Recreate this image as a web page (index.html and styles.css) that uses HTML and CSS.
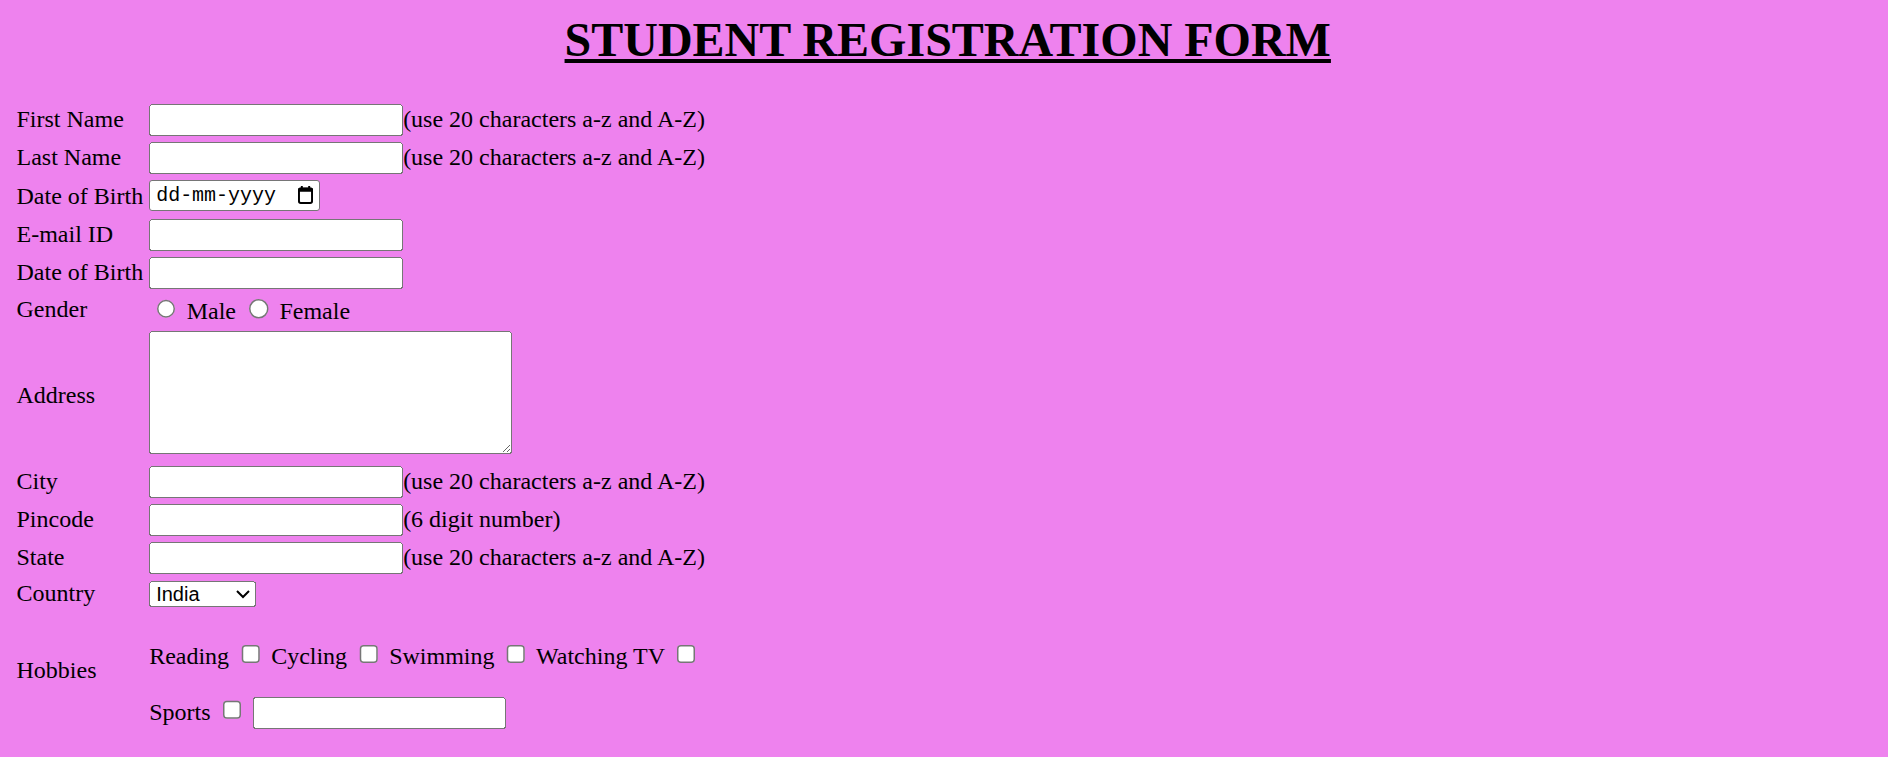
FILE: index.html
```html
<!DOCTYPE html>
<html lang="en">
<head>
<meta charset="utf-8">
<title>Student Registration Form</title>
<link rel="stylesheet" href="styles.css">
</head>
<body>
<h1 class="title">STUDENT REGISTRATION FORM</h1>
<form class="form">
  <label class="lbl" for="fn">First Name</label>
  <div class="field"><input id="fn" class="text" type="text"><span>(use 20 characters a-z and A-Z)</span></div>

  <label class="lbl" for="ln">Last Name</label>
  <div class="field"><input id="ln" class="text" type="text"><span>(use 20 characters a-z and A-Z)</span></div>

  <label class="lbl" for="dob">Date of Birth</label>
  <div class="field"><span class="date" id="dob" role="textbox" tabindex="0"><span class="date-text">dd-mm-yyyy</span><svg class="cal" viewBox="0 0 10 12" width="10" height="12" aria-hidden="true"><rect x="1.9" y="0" width="1.3" height="2.4" fill="#000"/><rect x="6.8" y="0" width="1.3" height="2.4" fill="#000"/><rect x="0.65" y="1.65" width="8.7" height="9.7" rx="1.2" fill="none" stroke="#000" stroke-width="1.3"/><rect x="0" y="1.2" width="10" height="2.6" rx="1" fill="#000"/></svg></span></div>

  <label class="lbl" for="em">E-mail ID</label>
  <div class="field"><input id="em" class="text" type="text"></div>

  <label class="lbl" for="dob2">Date of Birth</label>
  <div class="field"><input id="dob2" class="text" type="text"></div>

  <div class="lbl">Gender</div>
  <div class="field"><input type="radio" name="g" id="gm"> <label for="gm">Male</label> <input type="radio" name="g" id="gf"> <label for="gf">Female</label></div>

  <label class="lbl" for="addr">Address</label>
  <div class="field"><textarea id="addr" class="area"></textarea></div>

  <label class="lbl" for="city">City</label>
  <div class="field"><input id="city" class="text" type="text"><span>(use 20 characters a-z and A-Z)</span></div>

  <label class="lbl" for="pin">Pincode</label>
  <div class="field"><input id="pin" class="text" type="text"><span>(6 digit number)</span></div>

  <label class="lbl" for="st">State</label>
  <div class="field"><input id="st" class="text" type="text"><span>(use 20 characters a-z and A-Z)</span></div>

  <label class="lbl" for="co">Country</label>
  <div class="field"><select id="co" class="sel"><option>India</option><option>Other</option></select></div>

  <div class="lbl">Hobbies</div>
  <div class="field hobbies">
    <div class="hobby-line">Reading <input type="checkbox"> Cycling <input type="checkbox"> Swimming <input type="checkbox"> Watching TV <input type="checkbox"></div>
    <div class="hobby-line">Sports <input type="checkbox"> <input class="text" type="text"></div>
  </div>
</form>
</body>
</html>
```

FILE: styles.css
```css
html {
  zoom: 1.5;
}

body {
  margin: 8px;
  background: #ee82ee;
  color: #000;
  font-family: "Liberation Serif", "Times New Roman", serif;
  font-size: 16px;
}

.title {
  margin: 0 0 21.44px;
  padding-left: 5px;
  text-align: center;
  font-size: 32px;
  font-weight: bold;
  text-decoration: underline;
}

.form {
  display: grid;
  grid-template-columns: auto auto;
  justify-content: start;
  align-items: center;
  gap: 2px;
  padding: 2px;
}

.lbl,
.field {
  padding: 1px;
  white-space: nowrap;
}

.text {
  width: 169.33px;
  box-sizing: border-box;
}

.area {
  width: 242px;
  height: 82px;
  box-sizing: border-box;
  vertical-align: baseline;
}

.date {
  display: inline-flex;
  align-items: center;
  justify-content: space-between;
  width: 114px;
  height: 21px;
  margin-bottom: 1px;
  box-sizing: border-box;
  padding: 0 4px 0 4px;
  border: 1px solid #767676;
  border-radius: 2px;
  background: #fff;
  font-family: "Liberation Mono", "DejaVu Sans Mono", monospace;
  font-size: 13.33px;
  color: #000;
  vertical-align: baseline;
}

.cal {
  display: block;
  flex: none;
}

.sel {
  width: 71px;
}

.hobby-line {
  margin-top: 18.4px;
}

.hobby-line + .hobby-line {
  margin-top: 17px;
}
```
